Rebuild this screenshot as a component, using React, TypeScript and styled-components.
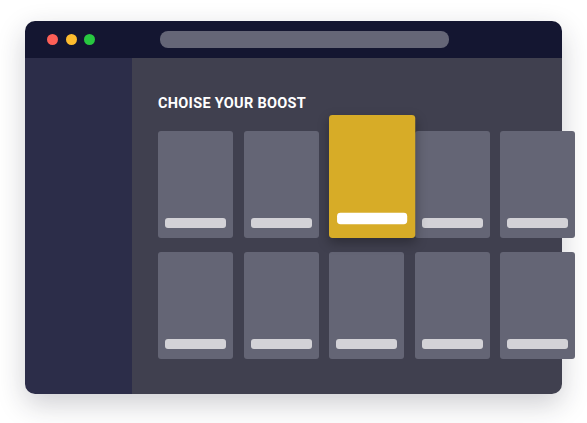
import React from 'react';
import styled, { createGlobalStyle } from 'styled-components';

const Global = createGlobalStyle`
  html, body {
    margin: 0;
    padding: 0;
    background: #ffffff;
    font-family: Roboto, "Liberation Sans", sans-serif;
  }
`;

const Page = styled.div`
  padding: 21px 0 0 25px;
  width: 587px;
  height: 423px;
  box-sizing: border-box;
`;

const Window = styled.div`
  width: 537px;
  height: 373px;
  border-radius: 10px;
  display: flex;
  flex-direction: column;
  box-shadow: 0 10px 28px rgba(30, 30, 50, 0.22);
`;

const TitleBar = styled.div`
  height: 37px;
  flex: none;
  background: #141631;
  border-radius: 10px 10px 0 0;
  display: flex;
  align-items: center;
  padding-left: 22px;
`;

const Dot = styled.span<{ color: string }>`
  flex: none;
  width: 11px;
  height: 11px;
  border-radius: 50%;
  background: ${(p) => p.color};
  margin-right: 7.5px;
`;

const UrlBar = styled.div`
  flex: none;
  margin-left: 57px;
  width: 289px;
  height: 17px;
  border-radius: 8px;
  background: #656677;
`;

const Body = styled.div`
  flex: 1;
  display: flex;
`;

const Sidebar = styled.div`
  flex: none;
  width: 107px;
  background: #2c2d49;
  border-radius: 0 0 0 10px;
`;

const Main = styled.div`
  flex: 1;
  min-width: 0;
  background: #40404f;
  border-radius: 0 0 10px 0;
  padding: 39px 0 0 26px;
`;

const Heading = styled.h2`
  margin: 0 0 20px;
  color: #ffffff;
  font-size: 14.5px;
  font-weight: 700;
  letter-spacing: 0.3px;
  line-height: 14px;
`;

const Grid = styled.div`
  display: grid;
  grid-template-columns: repeat(5, 75px);
  column-gap: 10.6px;
  row-gap: 14px;
  width: 418px;
`;

const Card = styled.div<{ active?: boolean }>`
  height: 107px;
  border-radius: 3px;
  background: ${(p) => (p.active ? '#d7ac27' : '#646575')};
  transform: ${(p) => (p.active ? 'scale(1.15)' : 'none')};
  transform-origin: bottom left;
  box-shadow: ${(p) => (p.active ? '0 4px 10px rgba(0, 0, 0, 0.3)' : 'none')};
  position: relative;
  z-index: ${(p) => (p.active ? 2 : 1)};
  display: flex;
  align-items: flex-end;
  padding: 0 7px ${(p) => (p.active ? '12px' : '10px')};
  box-sizing: border-box;
`;

const Label = styled.div<{ active?: boolean }>`
  width: 100%;
  height: 10px;
  border-radius: 3px;
  background: ${(p) => (p.active ? '#ffffff' : '#d3d2d7')};
`;

export default function App() {
  const cards = Array.from({ length: 10 }, (_, i) => i);
  return (
    <Page>
      <Global />
      <Window>
        <TitleBar>
          <Dot color="#fe5f57" />
          <Dot color="#febc2e" />
          <Dot color="#28c840" />
          <UrlBar />
        </TitleBar>
        <Body>
          <Sidebar />
          <Main>
            <Heading>CHOISE YOUR BOOST</Heading>
            <Grid>
              {cards.map((i) => (
                <Card key={i} active={i === 2}>
                  <Label active={i === 2} />
                </Card>
              ))}
            </Grid>
          </Main>
        </Body>
      </Window>
    </Page>
  );
}
